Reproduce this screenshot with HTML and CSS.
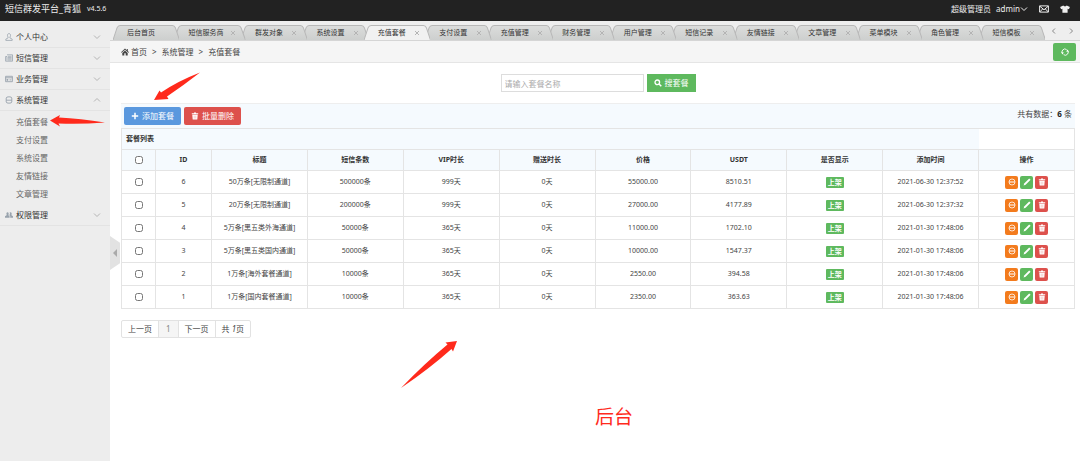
FILE: index.html
```html
<!DOCTYPE html>
<html lang="zh-CN">
<head>
<meta charset="utf-8">
<title>短信群发平台_青狐</title>
<link rel="stylesheet" href="styles.css">
</head>
<body>
<svg class="defs" aria-hidden="true">
  <defs>
    <linearGradient id="tab-fill" x1="0" y1="0" x2="0" y2="1"><stop offset="0" stop-color="#dcdddc"/><stop offset="1" stop-color="#cdcfce"/></linearGradient>
    <symbol id="tab-shape" viewBox="0 0 66 16" preserveAspectRatio="none"><path d="M0 16 L4 3 Q5 .5 7 .5 H59 Q61 .5 62 3 L66 16" stroke="#b8b8b8" stroke-width="1"/></symbol>
    <symbol id="i-down" viewBox="0 0 8 8"><path d="M1 2.5 4 5.5 7 2.5" fill="none" stroke="currentColor"/></symbol>
    <symbol id="i-up" viewBox="0 0 8 8"><path d="M1 5.5 4 2.5 7 5.5" fill="none" stroke="currentColor"/></symbol>
    <symbol id="i-left" viewBox="0 0 8 8"><path d="M5 1.500 2.5 4 5 6.500" fill="none" stroke="currentColor"/></symbol>
    <symbol id="i-right" viewBox="0 0 8 8"><path d="M3 1.500 5.5 4 3 6.500" fill="none" stroke="currentColor"/></symbol>
    <symbol id="i-x" viewBox="0 0 8 8"><path d="M2 2 6 6M6 2 2 6" fill="none" stroke="currentColor"/></symbol>
    <symbol id="i-user" viewBox="0 0 8 8"><path d="M4 .6C2.8.6 2.4 1.600 2.500 2.600 2.600 3.600 3.100 4.200 3.200 4.800L.8 6.200V7.400H7.200V6.200L4.800 4.800C4.900 4.200 5.400 3.600 5.500 2.600 5.600 1.600 5.200.6 4 .6Z" fill="none" stroke="currentColor" stroke-width=".8"/></symbol>
    <symbol id="i-news" viewBox="0 0 8 8"><path d="M2 .8H7.500V7.200H.6V2.500H2V6.500M3 2.300H6.600M3 3.600H6.600M3 4.800H6.600M3 6H6.600" fill="none" stroke="currentColor" stroke-width=".8"/></symbol>
    <symbol id="i-card" viewBox="0 0 8 8"><path d="M.6 1.300H7.400V6.700H.6ZM.6 2.800H7.400M4.500 4.900H6.400M1.800 4.500H3V5.300H1.800Z" fill="none" stroke="currentColor" stroke-width=".9"/></symbol>
    <symbol id="i-sys" viewBox="0 0 8 8"><path d="M1.200 2Q1.200.8 4 .8T6.800 2V6Q6.800 7.200 4 7.200T1.200 6ZM1.200 4.200H6.800" fill="none" stroke="currentColor" stroke-width=".9"/></symbol>
    <symbol id="i-group" viewBox="0 0 8 8"><path d="M2.600 1.300A1.300 1.500 0 0 1 3.200 4L4.600 5.200V6.800H0V5.200L1.900 4A1.300 1.500 0 0 1 2.600 1.300ZM5.600 1.300A1.300 1.500 0 0 1 6.200 4L8 5.200V6.800H5.200V5L4.300 4.200A2 2 0 0 0 4.600 1.600Q5 1.300 5.600 1.300Z" fill="currentColor"/></symbol>
    <symbol id="i-home" viewBox="0 0 8 8"><path d="M4 .6 0 4.200.6 4.800 4 1.800 7.400 4.800 8 4.200 6.800 3.100V1H5.800V2.200ZM4 2.500 1.300 4.900V7.500H3.300V5.300H4.700V7.500H6.700V4.900Z" fill="currentColor"/></symbol>
    <symbol id="i-plus" viewBox="0 0 8 8"><path d="M4 .8V7.200M.8 4H7.200" fill="none" stroke="currentColor" stroke-width="1.500"/></symbol>
    <symbol id="i-trash" viewBox="0 0 8 8"><path d="M3 .5H5V1.200H7.200V2.300H.8V1.200H3ZM1.300 2.800H6.700L6.300 7.500H1.700Z" fill="currentColor"/><path d="M3.200 3.600V6.600M4.800 3.600V6.600" stroke="#dd514c" stroke-width=".3"/></symbol>
    <symbol id="i-pen" viewBox="0 0 8 8"><path d="M6.200.4 7.600 1.800 2.600 6.800.6 7.400 1.200 5.400Z" fill="currentColor"/></symbol>
    <symbol id="i-ban" viewBox="0 0 8 8"><circle cx="4" cy="4" r="3" fill="none" stroke="currentColor" stroke-width=".8"/><path d="M1.200 4H6.800" stroke="currentColor" stroke-width="1"/></symbol>
    <symbol id="i-search" viewBox="0 0 8 8"><circle cx="3.300" cy="3.300" r="2.300" fill="none" stroke="currentColor" stroke-width="1.300"/><path d="M5 5 7.300 7.300" stroke="currentColor" stroke-width="1.500"/></symbol>
    <symbol id="i-mail" viewBox="0 0 10 8"><path d="M.6.9H9.400V7.100H.6ZM.8 1.200 5 4.800 9.200 1.200M.8 6.900 3.700 3.900M9.200 6.900 6.300 3.900" fill="none" stroke="currentColor" stroke-width="1"/></symbol>
    <symbol id="i-shirt" viewBox="0 0 10 8"><path d="M3.300.5Q5 2.200 6.700.5L9.900 2 8.900 4.200 7.600 3.700V7.700H2.400V3.700L1.100 4.200.1 2Z" fill="currentColor"/></symbol>
    <symbol id="i-refresh" viewBox="0 0 8 8"><path d="M1.700 6A3 3 0 0 1 5.600 1.500M6.300 2A3 3 0 0 1 2.600 6.700" fill="none" stroke="currentColor" stroke-width=".9"/><path d="M0 4.600 2.700 4.300 1.800 6.600ZM8 3.400 5.300 3.700 6.200 1.400Z" fill="currentColor"/></symbol>
  </defs>
</svg>

<header class="topbar">
  <h1 class="brand">短信群发平台_青狐</h1>
  <span class="version">v4.5.6</span>
  <div class="account">
    <span>超级管理员</span>
    <button class="plain">admin<svg class="icon"><use href="#i-down"/></svg></button>
    <button class="plain" aria-label="消息"><svg class="icon wide"><use href="#i-mail"/></svg></button>
    <button class="plain" aria-label="换肤"><svg class="icon wide"><use href="#i-shirt"/></svg></button>
  </div>
</header>

<div class="layout">
  <nav class="sidebar">
    <button class="menu"><svg class="icon"><use href="#i-user"/></svg>个人中心<svg class="icon chev"><use href="#i-down"/></svg></button>
    <button class="menu"><svg class="icon"><use href="#i-news"/></svg>短信管理<svg class="icon chev"><use href="#i-down"/></svg></button>
    <button class="menu"><svg class="icon"><use href="#i-card"/></svg>业务管理<svg class="icon chev"><use href="#i-down"/></svg></button>
    <button class="menu"><svg class="icon"><use href="#i-sys"/></svg>系统管理<svg class="icon chev"><use href="#i-up"/></svg></button>
    <div class="submenu">
      <a href="#">充值套餐</a>
      <a href="#">支付设置</a>
      <a href="#">系统设置</a>
      <a href="#">友情链接</a>
      <a href="#">文章管理</a>
    </div>
    <button class="menu"><svg class="icon"><use href="#i-group"/></svg>权限管理<svg class="icon chev"><use href="#i-down"/></svg></button>
    <button class="fold" aria-label="收起菜单"></button>
  </nav>

  <main class="main">
    <div class="tabbar">
      <div class="tabs">
        <div class="tab"><svg class="shape"><use href="#tab-shape"/></svg><span>后台首页</span></div>
        <div class="tab long"><svg class="shape"><use href="#tab-shape"/></svg><span>短信服务商</span><svg class="icon x"><use href="#i-x"/></svg></div>
        <div class="tab"><svg class="shape"><use href="#tab-shape"/></svg><span>群发对象</span><svg class="icon x"><use href="#i-x"/></svg></div>
        <div class="tab"><svg class="shape"><use href="#tab-shape"/></svg><span>系统设置</span><svg class="icon x"><use href="#i-x"/></svg></div>
        <div class="tab active"><svg class="shape"><use href="#tab-shape"/></svg><span>充值套餐</span><svg class="icon x"><use href="#i-x"/></svg></div>
        <div class="tab"><svg class="shape"><use href="#tab-shape"/></svg><span>支付设置</span><svg class="icon x"><use href="#i-x"/></svg></div>
        <div class="tab"><svg class="shape"><use href="#tab-shape"/></svg><span>充值管理</span><svg class="icon x"><use href="#i-x"/></svg></div>
        <div class="tab"><svg class="shape"><use href="#tab-shape"/></svg><span>财务管理</span><svg class="icon x"><use href="#i-x"/></svg></div>
        <div class="tab"><svg class="shape"><use href="#tab-shape"/></svg><span>用户管理</span><svg class="icon x"><use href="#i-x"/></svg></div>
        <div class="tab"><svg class="shape"><use href="#tab-shape"/></svg><span>短信记录</span><svg class="icon x"><use href="#i-x"/></svg></div>
        <div class="tab"><svg class="shape"><use href="#tab-shape"/></svg><span>友情链接</span><svg class="icon x"><use href="#i-x"/></svg></div>
        <div class="tab"><svg class="shape"><use href="#tab-shape"/></svg><span>文章管理</span><svg class="icon x"><use href="#i-x"/></svg></div>
        <div class="tab"><svg class="shape"><use href="#tab-shape"/></svg><span>菜单模块</span><svg class="icon x"><use href="#i-x"/></svg></div>
        <div class="tab"><svg class="shape"><use href="#tab-shape"/></svg><span>角色管理</span><svg class="icon x"><use href="#i-x"/></svg></div>
        <div class="tab"><svg class="shape"><use href="#tab-shape"/></svg><span>短信模板</span><svg class="icon x"><use href="#i-x"/></svg></div>
      </div>
      <div class="tabnav">
        <button class="plain" aria-label="向左"><svg class="icon"><use href="#i-left"/></svg></button>
        <button class="plain" aria-label="向右"><svg class="icon"><use href="#i-right"/></svg></button>
      </div>
    </div>

    <div class="crumbs">
      <svg class="icon"><use href="#i-home"/></svg><a href="#">首页</a><span class="sep">&gt;</span><span>系统管理</span><span class="sep">&gt;</span><span>充值套餐</span>
      <button class="btn green refresh" aria-label="刷新"><svg class="icon"><use href="#i-refresh"/></svg></button>
    </div>

    <div class="content">
      <form class="search">
        <input type="text" aria-label="套餐名称" placeholder="请输入套餐名称">
        <button type="button" class="btn green square"><svg class="icon"><use href="#i-search"/></svg>搜套餐</button>
      </form>

      <div class="toolbar">
        <button class="btn blue"><svg class="icon"><use href="#i-plus"/></svg>添加套餐</button>
        <button class="btn red"><svg class="icon"><use href="#i-trash"/></svg>批量删除</button>
        <span class="total">共有数据：<strong>6</strong> 条</span>
      </div>

      <table class="list">
        <colgroup><col class="c-check"><col class="c-id"><col><col><col><col><col><col><col><col><col></colgroup>
        <thead>
          <tr><th class="caption" colspan="10">套餐列表</th><td class="blank"></td></tr>
          <tr><th><input type="checkbox" aria-label="全选"></th><th>ID</th><th>标题</th><th>短信条数</th><th>VIP时长</th><th>赠送时长</th><th>价格</th><th>USDT</th><th>是否显示</th><th>添加时间</th><th>操作</th></tr>
        </thead>
        <tbody>
          <tr><td><input type="checkbox" aria-label="选择 6"></td><td>6</td><td>50万条[无限制通道]</td><td>500000条</td><td>999天</td><td>0天</td><td>55000.00</td><td>8510.51</td><td><span class="tag">上架</span></td><td>2021-06-30 12:37:52</td><td><div class="ops"><button class="op orange" aria-label="下架"><svg class="icon"><use href="#i-ban"/></svg></button><button class="op green" aria-label="编辑"><svg class="icon"><use href="#i-pen"/></svg></button><button class="op red" aria-label="删除"><svg class="icon"><use href="#i-trash"/></svg></button></div></td></tr>
          <tr><td><input type="checkbox" aria-label="选择 5"></td><td>5</td><td>20万条[无限制通道]</td><td>200000条</td><td>999天</td><td>0天</td><td>27000.00</td><td>4177.89</td><td><span class="tag">上架</span></td><td>2021-06-30 12:37:32</td><td><div class="ops"><button class="op orange" aria-label="下架"><svg class="icon"><use href="#i-ban"/></svg></button><button class="op green" aria-label="编辑"><svg class="icon"><use href="#i-pen"/></svg></button><button class="op red" aria-label="删除"><svg class="icon"><use href="#i-trash"/></svg></button></div></td></tr>
          <tr><td><input type="checkbox" aria-label="选择 4"></td><td>4</td><td>5万条[黑五类外海通道]</td><td>50000条</td><td>365天</td><td>0天</td><td>11000.00</td><td>1702.10</td><td><span class="tag">上架</span></td><td>2021-01-30 17:48:06</td><td><div class="ops"><button class="op orange" aria-label="下架"><svg class="icon"><use href="#i-ban"/></svg></button><button class="op green" aria-label="编辑"><svg class="icon"><use href="#i-pen"/></svg></button><button class="op red" aria-label="删除"><svg class="icon"><use href="#i-trash"/></svg></button></div></td></tr>
          <tr><td><input type="checkbox" aria-label="选择 3"></td><td>3</td><td>5万条[黑五类国内通道]</td><td>50000条</td><td>365天</td><td>0天</td><td>10000.00</td><td>1547.37</td><td><span class="tag">上架</span></td><td>2021-01-30 17:48:06</td><td><div class="ops"><button class="op orange" aria-label="下架"><svg class="icon"><use href="#i-ban"/></svg></button><button class="op green" aria-label="编辑"><svg class="icon"><use href="#i-pen"/></svg></button><button class="op red" aria-label="删除"><svg class="icon"><use href="#i-trash"/></svg></button></div></td></tr>
          <tr><td><input type="checkbox" aria-label="选择 2"></td><td>2</td><td>1万条[海外套餐通道]</td><td>10000条</td><td>365天</td><td>0天</td><td>2550.00</td><td>394.58</td><td><span class="tag">上架</span></td><td>2021-01-30 17:48:06</td><td><div class="ops"><button class="op orange" aria-label="下架"><svg class="icon"><use href="#i-ban"/></svg></button><button class="op green" aria-label="编辑"><svg class="icon"><use href="#i-pen"/></svg></button><button class="op red" aria-label="删除"><svg class="icon"><use href="#i-trash"/></svg></button></div></td></tr>
          <tr><td><input type="checkbox" aria-label="选择 1"></td><td>1</td><td>1万条[国内套餐通道]</td><td>10000条</td><td>365天</td><td>0天</td><td>2350.00</td><td>363.63</td><td><span class="tag">上架</span></td><td>2021-01-30 17:48:06</td><td><div class="ops"><button class="op orange" aria-label="下架"><svg class="icon"><use href="#i-ban"/></svg></button><button class="op green" aria-label="编辑"><svg class="icon"><use href="#i-pen"/></svg></button><button class="op red" aria-label="删除"><svg class="icon"><use href="#i-trash"/></svg></button></div></td></tr>
        </tbody>
      </table>

      <div class="pager"><a href="#">上一页</a><span class="current">1</span><a href="#">下一页</a><span>共 <i>1</i>页</span></div>
    </div>
  </main>
</div>

<div class="notes">
  <svg class="arrows" width="480" height="400" viewBox="0 0 480 400" aria-hidden="true">
    <path d="M154 100 159.500 90.500 161 92.500Q178 81 200 72.500 184 85 167 96.500L168.500 99Z"/>
    <path d="M50 120.500 60 115 59 117.500Q80 118.500 105 122.500 80 124.500 58.500 123.500L60 126.500Z"/>
    <path d="M457 341 445.500 342.500 447.500 344.500Q425 363 401 388 429 369 451.500 349L453 351.500Z"/>
  </svg>
  <span class="label">后台</span>
</div>
</body>
</html>
```

FILE: styles.css
```css
* { box-sizing: border-box; }
body {
  margin: 0;
  min-height: 100vh;
  display: flex;
  flex-direction: column;
  position: relative;
  background: #fff;
  color: #444;
  font: 8px/12px "Noto Sans", "Noto Sans CJK SC", sans-serif;
}
button, input { font: inherit; color: inherit; }
button { border: 0; padding: 0; background: none; cursor: pointer; }
a { color: inherit; text-decoration: none; }
.defs { position: absolute; width: 0; height: 0; }
.icon { width: 8px; height: 8px; flex: none; display: block; }
.icon.wide { width: 10px; }

.topbar {
  height: 21px;
  display: flex;
  align-items: center;
  padding: 0 10px 3px 5px;
  background: #222;
  color: #eee;
}
.brand { margin: 0; font-size: 9px; font-weight: 400; }
.version { margin-left: 6px; font-size: 7px; }
.account { margin-left: auto; display: flex; align-items: center; gap: 5px; }
.account .plain + .plain { margin-left: 6px; }
.plain { display: flex; align-items: center; }

.layout { flex: 1; display: flex; }
.sidebar {
  position: relative;
  width: 110px;
  flex: none;
  padding-top: 6px;
  background: #ededed;
}
.menu {
  display: flex;
  align-items: center;
  gap: 3px;
  width: 100%;
  height: 21px;
  padding: 0 9px 0 5px;
  border-bottom: 1px solid #e3e3e3;
  color: #333;
}
.menu .icon { color: #99a3ad; }
.menu .chev { margin-left: auto; color: #b5b5b5; }
.submenu { display: flex; flex-direction: column; padding: 2px 0 2px 16px; }
.submenu a { line-height: 18px; color: #666; }
.fold {
  position: absolute;
  left: 110px;
  top: 215px;
  width: 10px;
  height: 34px;
  background: #e2e2e2;
  clip-path: polygon(0 0, 100% 20%, 100% 80%, 0 100%);
}
.fold::before {
  content: "";
  display: block;
  margin-left: 3px;
  width: 0;
  border: 4px solid transparent;
  border-left: 0;
  border-right-color: #aaa;
}

.main { flex: 1; min-width: 0; }
.tabbar { display: flex; height: 20px; background: #eee; border-bottom: 1px solid #d5d5d5; }
.tabs { flex: 1; display: flex; min-width: 0; padding: 4px 5px 0 3px; overflow: hidden; }
.tab {
  position: relative;
  flex: 61 1 0;
  display: flex;
  align-items: center;
  justify-content: space-between;
  padding: 0 4px 0 14px;
  font-size: 7px;
  white-space: nowrap;
  color: #333;
}
.tab.long { flex-grow: 68; }
.tab:nth-child(1) { z-index: 15; }
.tab:nth-child(2) { z-index: 14; }
.tab:nth-child(3) { z-index: 13; }
.tab:nth-child(4) { z-index: 12; }
.tab:nth-child(5) { z-index: 20; }
.tab:nth-child(6) { z-index: 10; }
.tab:nth-child(7) { z-index: 9; }
.tab:nth-child(8) { z-index: 8; }
.tab:nth-child(9) { z-index: 7; }
.tab:nth-child(10) { z-index: 6; }
.tab:nth-child(11) { z-index: 5; }
.tab:nth-child(12) { z-index: 4; }
.tab:nth-child(13) { z-index: 3; }
.tab:nth-child(14) { z-index: 2; }
.tab:nth-child(15) { z-index: 1; }
.shape { position: absolute; left: 0; top: 0; width: calc(100% + 5px); height: 100%; fill: url(#tab-fill); }
.tab.active .shape { fill: #f1f1f1; }
.tab span, .tab .x { position: relative; }
.tab .x { color: #b4b4b4; }
.tabnav { width: 35px; display: flex; align-items: center; justify-content: space-around; color: #888; }

.crumbs {
  display: flex;
  align-items: center;
  height: 22px;
  padding: 0 4px 0 11px;
  gap: 2px;
  background: #f5f5f5;
  border-bottom: 1px solid #e5e5e5;
}
.sep { margin: 0 3px; }
.btn {
  display: inline-flex;
  align-items: center;
  justify-content: center;
  gap: 3px;
  height: 18px;
  padding: 0 7px;
  border-radius: 2px;
  color: #fff;
}
.green { background: #5eb95e; }
.blue { background: #5a98de; }
.red { background: #dd514c; }
.orange { background: #f37b1d; }
.square { border-radius: 0; }
.refresh { margin-left: auto; width: 23px; }

.content { padding: 11px 5px 11px 11px; }
.search { display: flex; justify-content: center; gap: 3px; margin-bottom: 11px; }
.search input {
  width: 143px;
  height: 18px;
  padding: 0 3px;
  border: 1px solid #ddd;
  background: #fff;
}
.search input::placeholder { color: #aaa; }
.toolbar {
  display: flex;
  align-items: center;
  gap: 3px;
  height: 25px;
  padding: 0 3px;
  background: #f5fafe;
  border-top: 1px solid #eee;
}
.total { margin-left: auto; padding-bottom: 4px; }
.total strong { color: #222; }

.list {
  width: 100%;
  table-layout: fixed;
  border-collapse: collapse;
  border: 1px solid #e4e4e4;
  font-size: 7px;
  line-height: 10px;
  text-align: center;
}
.c-check { width: 34px; }
.c-id { width: 56px; }
.list th, .list td { height: 23px; padding: 0; border: 1px solid #e4e4e4; }
.list thead th, .list thead td { height: 21px; }
.list th { background: #f5fafe; color: #333; }
.list .caption { padding-left: 4px; text-align: left; border-right: 0; }
.list .blank { border-left: 0; border-bottom: 0; }
.list input { display: block; width: 8px; height: 8px; margin: 0 auto; }
.tag {
  display: inline-block;
  padding: 0 2px;
  border-radius: 1px;
  background: #5eb95e;
  color: #fff;
  font-weight: 700;
  line-height: 11px;
}
.ops { display: flex; justify-content: center; gap: 2px; }
.op {
  display: flex;
  align-items: center;
  justify-content: center;
  width: 13px;
  height: 13px;
  border-radius: 2px;
  color: #fff;
}

.pager {
  display: inline-flex;
  margin-top: 11px;
  border: 1px solid #e2e2e2;
  border-radius: 2px;
  line-height: 16px;
}
.pager > * { padding: 0 6px; border-right: 1px solid #e2e2e2; }
.pager > :last-child { border-right: 0; }
.pager .current { padding: 0 7px; background: #f5f5f5; color: #888; }

.notes { position: absolute; left: 0; top: 0; z-index: 30; pointer-events: none; color: #ff2a1c; }
.arrows { display: block; fill: currentColor; }
.label { position: absolute; left: 595px; top: 405px; font-size: 19px; line-height: 24px; white-space: nowrap; }
```
